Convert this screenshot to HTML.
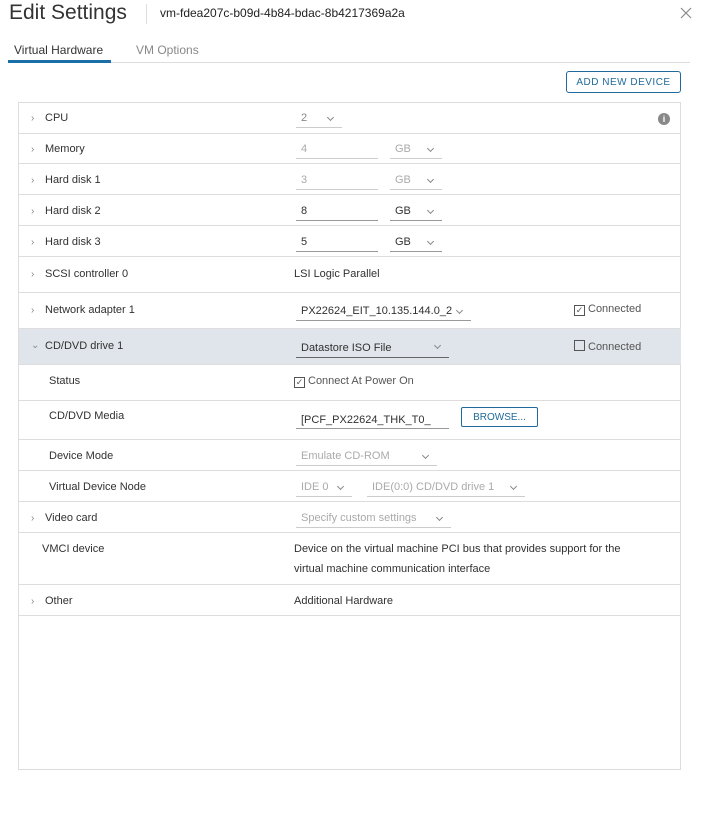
<!DOCTYPE html><html><head><style>
body{margin:0;width:710px;height:822px;background:#fff;font-family:"Liberation Sans",sans-serif;font-size:11px;color:#313131;position:relative;overflow:hidden}
.a{position:absolute}
.row{position:absolute;left:19px;width:662px;border-bottom:1px solid #ddd}
.lbl{position:absolute;left:26px}
.sub{position:absolute;left:30px}
.chev{position:absolute;left:12px;color:#888;font-size:10px}
.in{position:absolute;border-bottom:1px solid #999;height:17px;line-height:15px;padding-left:5px;box-sizing:border-box}
.dis{color:#aaa;border-color:#ccc}
.dd::after{content:"";position:absolute;right:9px;top:4px;width:4px;height:4px;border-right:1px solid #888;border-bottom:1px solid #888;transform:rotate(45deg)}
.cb{display:inline-block;width:9px;height:9px;border:1px solid #555;vertical-align:-1px;margin-right:3px;font-size:9px;line-height:8px;text-align:center}
</style></head><body>
<div class="a" style="left:9px;top:1px;font-size:21px;color:#333">Edit Settings</div>
<div class="a" style="left:146px;top:4px;width:1px;height:20px;background:#ddd"></div>
<div class="a" style="left:160px;top:6px;font-size:12px;color:#222">vm-fdea207c-b09d-4b84-bdac-8b4217369a2a</div>
<svg class="a" style="left:680px;top:7px" width="12" height="12"><path d="M1 1L11 11M11 1L1 11" stroke="#888" stroke-width="1.2"/></svg>
<div class="a" style="left:14px;top:43px;font-size:12px;color:#333">Virtual Hardware</div>
<div class="a" style="left:136px;top:43px;font-size:12px;color:#888">VM Options</div>
<div class="a" style="left:8px;top:62px;width:682px;height:1px;background:#ddd"></div>
<div class="a" style="left:8px;top:60px;width:103px;height:3px;background:#1a6fa8"></div>
<div class="a" style="left:566px;top:71px;width:115px;height:22px;border:1px solid #1f6a9a;border-radius:3px;box-sizing:border-box;color:#1f6a9a;font-size:10px;letter-spacing:.5px;text-align:center;line-height:21px">ADD NEW DEVICE</div>
<div class="a" style="left:18px;top:102px;width:663px;height:668px;border:1px solid #ddd;box-sizing:border-box"></div>

<div class="row" style="top:102px;height:31px"><span class="chev" style="top:11px">›</span><span class="lbl" style="top:10px">CPU</span><div class="in dd dis" style="left:277px;top:9px;width:46px;color:#888">2</div><div class="a" style="left:639px;top:11px;width:12px;height:12px;border-radius:50%;background:#888;color:#fff;font-size:9px;text-align:center;line-height:12px;font-weight:bold">i</div></div>
<div class="row" style="top:133px;height:30px"><span class="chev" style="top:11px">›</span><span class="lbl" style="top:10px">Memory</span><div class="in dis" style="left:277px;top:9px;width:82px">4</div><div class="in dd dis" style="left:371px;top:9px;width:52px">GB</div></div>
<div class="row" style="top:164px;height:30px"><span class="chev" style="top:11px">›</span><span class="lbl" style="top:10px">Hard disk 1</span><div class="in dis" style="left:277px;top:9px;width:82px">3</div><div class="in dd dis" style="left:371px;top:9px;width:52px">GB</div></div>
<div class="row" style="top:195px;height:30px"><span class="chev" style="top:11px">›</span><span class="lbl" style="top:10px">Hard disk 2</span><div class="in" style="left:277px;top:9px;width:82px">8</div><div class="in dd" style="left:371px;top:9px;width:52px">GB</div></div>
<div class="row" style="top:226px;height:30px"><span class="chev" style="top:11px">›</span><span class="lbl" style="top:10px">Hard disk 3</span><div class="in" style="left:277px;top:9px;width:82px">5</div><div class="in dd" style="left:371px;top:9px;width:52px">GB</div></div>
<div class="row" style="top:257px;height:35px"><span class="chev" style="top:12px">›</span><span class="lbl" style="top:11px">SCSI controller 0</span><span class="a" style="left:275px;top:11px">LSI Logic Parallel</span></div>
<div class="row" style="top:293px;height:35px"><span class="chev" style="top:12px">›</span><span class="lbl" style="top:11px">Network adapter 1</span><div class="in dd" style="left:277px;top:11px;width:175px;padding-right:14px;overflow:hidden;white-space:nowrap">PX22624_EIT_10.135.144.0_2</div><span class="a" style="left:555px;top:10px;color:#555"><span class="cb">✓</span>Connected</span></div>
<div class="row" style="top:329px;height:35px;background:#dfe5ea"><span class="chev" style="top:11px">⌄</span><span class="lbl" style="top:11px">CD/DVD drive 1</span><div class="in dd" style="left:277px;top:10px;width:153px;height:19px;line-height:18px;border-color:#666">Datastore ISO File</div><span class="a" style="left:555px;top:11px;color:#555"><span class="cb"></span>Connected</span></div>
<div class="row" style="top:365px;height:35px"><span class="sub" style="top:10px">Status</span><span class="a" style="left:275px;top:10px;color:#555"><span class="cb">✓</span>Connect At Power On</span></div>
<div class="row" style="top:401px;height:38px"><span class="sub" style="top:9px">CD/DVD Media</span><div class="in" style="left:277px;top:8px;width:153px;height:20px;line-height:22px">[PCF_PX22624_THK_T0_</div><div class="a" style="left:442px;top:6px;width:77px;height:20px;border:1px solid #1f6a9a;border-radius:2px;box-sizing:border-box;color:#1f6a9a;font-size:10px;text-align:center;line-height:19px">BROWSE...</div></div>
<div class="row" style="top:440px;height:30px"><span class="sub" style="top:10px">Device Mode</span><div class="in dd dis" style="left:277px;top:9px;width:141px">Emulate CD-ROM</div></div>
<div class="row" style="top:471px;height:30px"><span class="sub" style="top:10px">Virtual Device Node</span><div class="in dd dis" style="left:277px;top:9px;width:56px">IDE 0</div><div class="in dd dis" style="left:348px;top:9px;width:158px">IDE(0:0) CD/DVD drive 1</div></div>
<div class="row" style="top:502px;height:30px"><span class="chev" style="top:11px">›</span><span class="lbl" style="top:10px">Video card</span><div class="in dd dis" style="left:277px;top:9px;width:155px">Specify custom settings</div></div>
<div class="row" style="top:533px;height:51px"><span class="lbl" style="top:10px;left:23px">VMCI device</span><span class="a" style="left:275px;top:6px;line-height:20px;width:350px">Device on the virtual machine PCI bus that provides support for the virtual machine communication interface</span></div>
<div class="row" style="top:585px;height:30px"><span class="chev" style="top:11px">›</span><span class="lbl" style="top:10px">Other</span><span class="a" style="left:275px;top:10px">Additional Hardware</span></div>
</body></html>
